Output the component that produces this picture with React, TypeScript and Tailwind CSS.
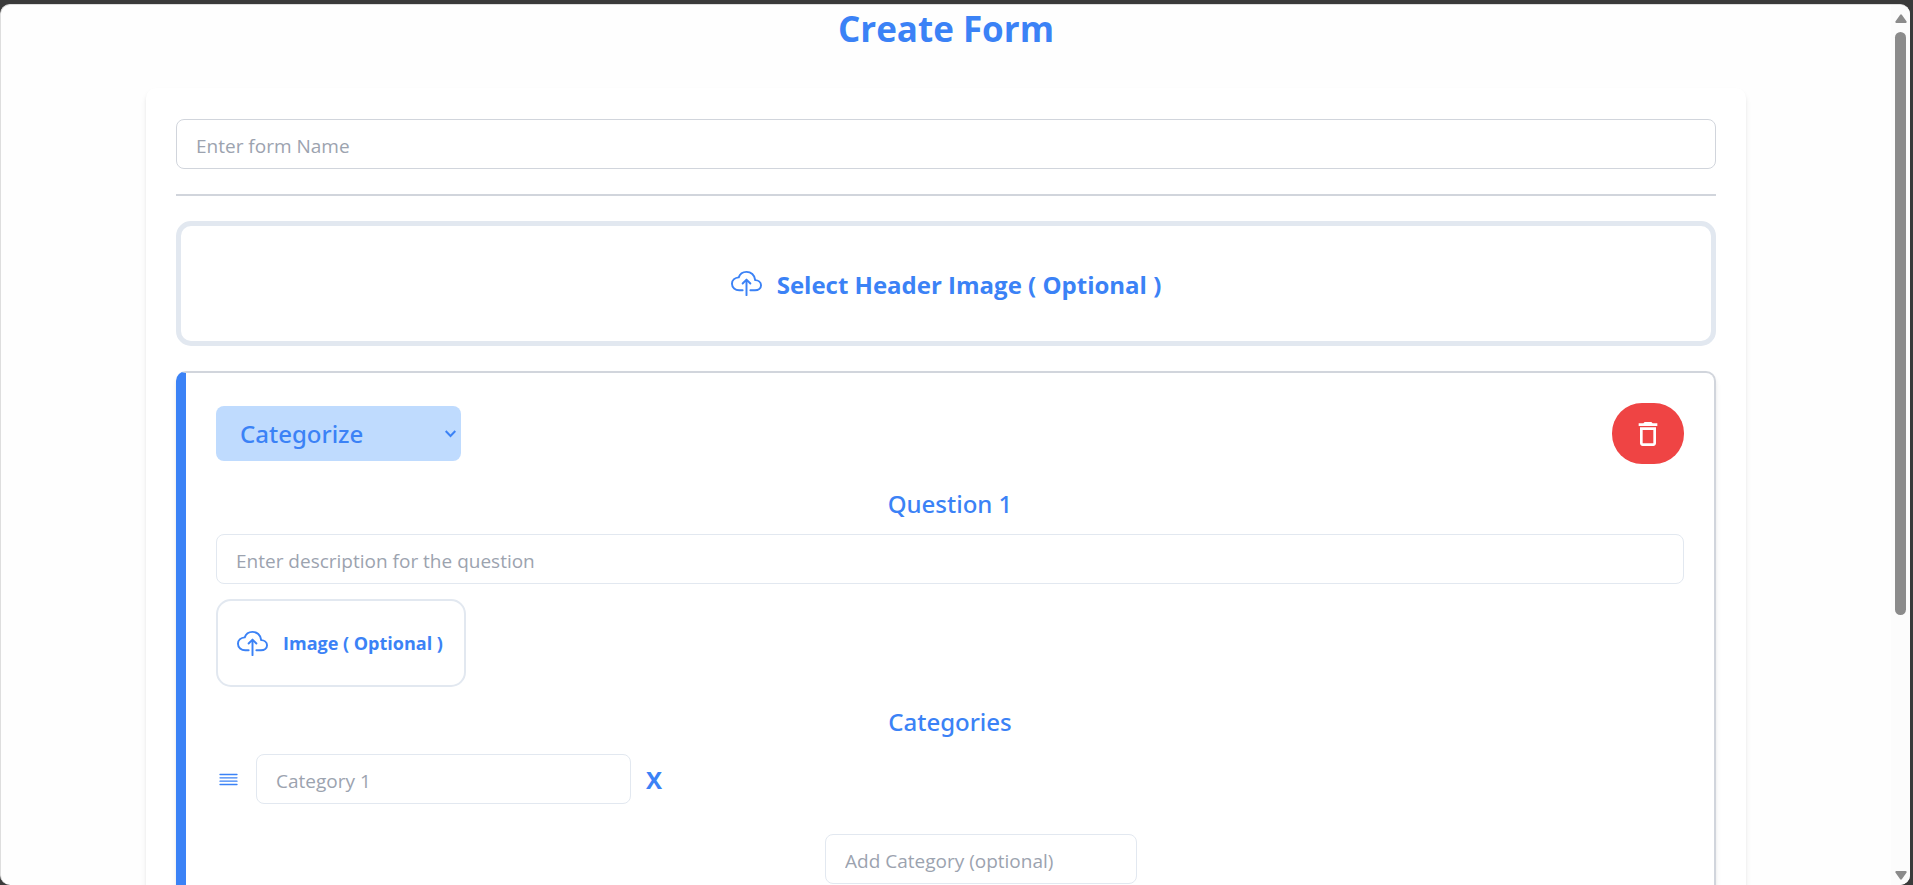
import { useState } from "react";
import { IoCloudUploadOutline } from "react-icons/io5";
import { MdDeleteOutline } from "react-icons/md";

const field =
  "h-[50px] rounded-lg border bg-white px-[19px] pt-1 text-[19px] text-gray-700 placeholder:text-[#9ca3af] focus:outline-none";

const heading = "text-center font-['Noto_Sans',sans-serif] text-2xl leading-10 font-medium text-[#3b82f6]";

function ScrollRail() {
  return (
    <div aria-hidden="true" className="flex w-[19px] shrink-0 flex-col items-center justify-between bg-[#fcfcfc] pt-[9px] pb-[5px]">
      <div className="flex min-h-0 flex-1 flex-col items-center gap-[9px]">
        <svg width="12" height="9" viewBox="0 0 12 9">
          <path d="M5 1Q6 -.5 7 1L11.6 7.4Q12 9 10.500 9H1.500Q0 9 .4 7.400Z" fill="#8b8b8b" />
        </svg>
        <div className="h-[68%] w-[11px] rounded-full bg-[#8b8b8b]" />
      </div>
      <svg width="12" height="9" viewBox="0 0 12 9">
        <path d="M5 8Q6 9.500 7 8L11.600 1.600Q12 0 10.500 0H1.500Q0 0 .4 1.600Z" fill="#8b8b8b" />
      </svg>
    </div>
  );
}

function DragHandle() {
  return (
    <svg className="mr-[3px] h-[14px] w-[19px] shrink-0" viewBox="0 0 19 14" stroke="#3b82f6" strokeWidth="1.3" strokeLinecap="round">
      <path d="M1 2.500h17M1 5.800h17M1 9.200h17M1 12.500h17" />
    </svg>
  );
}

function QuestionCard() {
  const [kind, setKind] = useState("Categorize");
  return (
    <section className="rounded-[10px] border-2 border-l-[10px] border-gray-300 border-l-[#3b82f6] bg-white px-[30px] pt-[30px] pb-10 shadow-md">
      <div className="flex items-center justify-between">
        <div className="relative">
          <select
            aria-label="Question type"
            value={kind}
            onChange={(e) => setKind(e.target.value)}
            className="h-[55px] w-[245px] appearance-none rounded-lg bg-[#bfdbfe] px-6 font-['Noto_Sans',sans-serif] text-2xl font-medium text-[#3b82f6]"
          >
            <option>Categorize</option>
            <option>Cloze</option>
            <option>Comprehension</option>
          </select>
          <svg className="pointer-events-none absolute top-6 right-[5px]" width="11" height="8" viewBox="0 0 11 8" fill="none" stroke="#3b82f6" strokeWidth="2">
            <path d="M.7 1l4.800 5 4.800-5" />
          </svg>
        </div>
        <button type="button" aria-label="Delete question" className="flex h-[61px] w-[72px] items-center justify-center rounded-[30px] bg-[#ef4444] text-white">
          <MdDeleteOutline size={32} />
        </button>
      </div>
      <h2 className={`${heading} mt-5`}>Question 1</h2>
      <input aria-label="Question description" placeholder="Enter description for the question" className={`${field} mt-[10px] w-full border-[#e2e8f0]`} />
      <button type="button" className="mt-[15px] flex h-[88px] w-[250px] items-center gap-[15px] rounded-[15px] border-2 border-[#e2e8f0] pl-[19px] text-lg font-bold whitespace-nowrap text-[#3b82f6]">
        <IoCloudUploadOutline size={31} className="shrink-0" />
        <span>Image ( Optional )</span>
      </button>
      <h2 className={`${heading} mt-[15px]`}>Categories</h2>
      <div className="mt-3 flex items-center gap-[15px] pl-[3px]">
        <DragHandle />
        <input aria-label="Category 1" placeholder="Category 1" className={`${field} w-[375px] border-[#e2e8f0]`} />
        <button type="button" aria-label="Remove category 1" className="pt-[2px] text-2xl font-bold text-[#3b82f6]">X</button>
      </div>
      <div className="mt-[30px] flex justify-center pl-[62px]">
        <input aria-label="Add category" placeholder="Add Category (optional)" className={`${field} w-[312px] border-[#e2e8f0]`} />
      </div>
    </section>
  );
}

export default function App() {
  return (
    <div className="h-screen overflow-hidden bg-[#3a3a3a] pt-1 pr-[3px] font-['Open_Sans','Noto_Sans',sans-serif]">
      <div className="flex h-full overflow-hidden rounded-[10px] border-t border-l border-[#dedede] bg-[#fefefe]">
        <main className="min-w-0 flex-1 overflow-hidden">
          <h1 className="text-center text-[35px] leading-[48px] font-bold text-[#3b82f6]">Create Form</h1>
          <form className="mx-auto mt-[35px] flex w-full max-w-[1600px] flex-col gap-[25px] rounded-[10px] bg-white px-[30px] pt-[31px] pb-10 shadow-md">
            <input aria-label="Form name" placeholder="Enter form Name" className={`${field} w-full border-gray-300`} />
            <hr className="border-t-2 border-gray-300" />
            <button type="button" className="flex h-[125px] w-full items-center justify-center gap-[15px] rounded-[15px] border-[5px] border-[#e2e8f0] text-2xl font-bold text-[#3b82f6]">
              <IoCloudUploadOutline size={31} />
              <span className="pt-[2px]">Select Header Image ( Optional )</span>
            </button>
            <QuestionCard />
          </form>
        </main>
        <ScrollRail />
      </div>
    </div>
  );
}
